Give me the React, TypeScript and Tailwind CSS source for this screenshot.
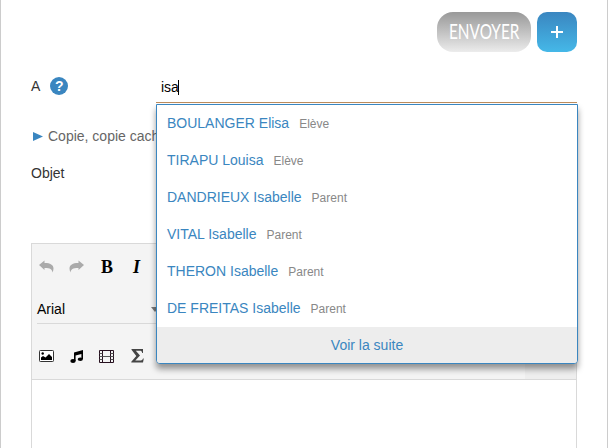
const suggestions = [
  { name: 'BOULANGER Elisa', role: 'Elève' },
  { name: 'TIRAPU Louisa', role: 'Elève' },
  { name: 'DANDRIEUX Isabelle', role: 'Parent' },
  { name: 'VITAL Isabelle', role: 'Parent' },
  { name: 'THERON Isabelle', role: 'Parent' },
  { name: 'DE FREITAS Isabelle', role: 'Parent' },
];

function Header() {
  return (
    <header className="flex h-[52px] items-end justify-end gap-1.5">
      <button className="flex h-10 w-[94px] items-center justify-center rounded-2xl bg-linear-to-b from-[#999] to-[#ececec] pb-[3px] font-[Lato,sans-serif] text-[21px] leading-none text-white">
        <span className="inline-block scale-x-[0.73]">ENVOYER</span>
      </button>
      <button className="flex size-10 items-center justify-center rounded-[10px] bg-linear-to-b from-[#3a86c0] to-[#45b8e8]">
        <svg width="12" height="12" viewBox="0 0 12 12" fill="#fff">
          <path d="M5 0h2v5h5v2H7v5H5V7H0V5h5z" />
        </svg>
      </button>
    </header>
  );
}

function HelpIcon() {
  return (
    <span className="flex size-[18px] items-center justify-center rounded-full bg-[#3a86c0] text-[14px] font-bold leading-none text-white">
      ?
    </span>
  );
}

function Suggestions() {
  return (
    <div className="absolute left-0 top-[29px] z-10 h-[260px] w-[422px] overflow-hidden rounded-b-[4px] border border-[#3a86c0] bg-white shadow-[0_5px_6px_rgba(0,0,0,0.4)]">
      {suggestions.map((s) => (
        <div key={s.name} className="flex h-[37px] items-baseline gap-2.5 px-2.5 pt-[9px] leading-[18px]">
          <span className="text-[14px] text-[#3a86c0]">{s.name}</span>
          <span className="text-[12px] text-[#888]">{s.role}</span>
        </div>
      ))}
      <div className="flex h-9 items-center justify-center bg-[#ededed] text-[14px] text-[#3a86c0]">Voir la suite</div>
    </div>
  );
}

function Undo({ flip = false }: { flip?: boolean }) {
  return (
    <svg width="15" height="13" viewBox="0 0 15 13" fill="#aaa" className={flip ? '-scale-x-100' : ''}>
      <path d="M0 5 5.500.5v2.600c5.500-.1 9 1.800 9 5.500 0 1.500-.4 2.800-1 3.900-.3-3.200-2.500-4.600-8-4.500V10z" />
    </svg>
  );
}

function Toolbar() {
  return (
    <div className="flex h-[136px] border-b border-[#d9d9d9] bg-[#f4f4f4]">
      <div className="w-[493px] shrink-0">
        <div className="flex h-[45px] items-center pl-[7px] font-['Liberation_Serif',serif] text-[18px] font-bold text-black">
          <Undo />
          <span className="ml-[15px]"><Undo flip /></span>
          <span className="ml-[17px] pt-0.5">B</span>
          <span className="ml-5 pt-0.5 italic">I</span>
        </div>
        <div className="ml-[5px] mt-[5px] flex h-[30px] w-[122px] items-center justify-between border-b border-[#d9d9d9] pt-px text-[14px] text-black">
          Arial
          <svg width="8" height="5" viewBox="0 0 8 5" fill="#777"><path d="M0 0h8L4 5z" /></svg>
        </div>
        <div className="mt-[22px] flex h-5 items-center pl-[7px]">
          <svg width="15" height="12" viewBox="0 0 15 12">
            <rect x=".5" y=".5" width="14" height="11" rx=".8" fill="#fff" stroke="#333" />
            <path d="M2 10V7.500L4 6l2.500 1.500L10 4l3 3v3z" />
            <circle cx="3.700" cy="3.500" r="1.200" />
          </svg>
          <svg width="13" height="13" viewBox="0 0 13 13" className="ml-4">
            <path d="M4 2.500 13 0v9h-1.600V4L5.600 5.600V11H4z" />
            <ellipse cx="3" cy="11" rx="2.700" ry="1.900" />
            <ellipse cx="10.300" cy="9.200" rx="2.600" ry="1.800" />
          </svg>
          <svg width="15" height="13" viewBox="0 0 15 13" fill="none" stroke="#26101f" className="ml-4">
            <path d="M.5.5h14v12H.5zM3.500.5v12M11.500.5v12" />
            <path d="M3.500 6.500h8M.5 3.500h3M.5 6.500h3M.5 9.500h3M11.500 3.500h3M11.500 6.500h3M11.500 9.500h3" stroke="#555" />
          </svg>
          <svg width="13" height="14" viewBox="0 0 13 14" className="mb-px ml-[17px]" fill="#444">
            <path d="M.5 0H12v4h-.8C11 2.200 10.300 1.700 8.500 1.700H4.800L9 6.500 4.300 11.500h4.500c2 0 2.700-.6 3.200-2h.8L12 13.500H.3v-.8L5.300 7 .5.800z" />
          </svg>
        </div>
      </div>
      <div className="flex-1 bg-[#eee]" />
    </div>
  );
}

export default function App() {
  return (
    <main className="h-[448px] w-[608px] overflow-hidden border-x border-[#ccc] bg-white px-[30px] font-['Liberation_Sans',Arial,sans-serif] text-[14px] text-[#333]">
      <Header />
      <div className="mt-[23px] flex h-7 w-[546px]">
        <div className="flex h-[22px] w-[125px] items-center gap-2.5 text-[14px] text-[#333]">
          <span>A</span>
          <HelpIcon />
        </div>
        <div className="relative h-7 w-[421px] border-b border-[#bd8c5c]">
          <div className="flex h-[25px] items-center pl-[5px] text-[14px] text-black">
            isa<span className="-ml-px h-[15px] w-px bg-black" />
          </div>
          <Suggestions />
        </div>
      </div>
      <div className="mt-[22px] flex h-[22px] items-center gap-[5px] pl-[2px] text-[14px] text-[#666]">
        <svg width="10" height="9" viewBox="0 0 10 9" fill="#3a86c0" className="mt-px"><path d="M0 0l10 4.500-10 4.500z" /></svg>
        Copie, copie cachée
      </div>
      <div className="mt-[15px] flex h-[22px] items-center">Objet</div>
      <div className="mt-[59px] h-[220px] w-[546px] border border-[#d9d9d9] bg-white">
        <Toolbar />
      </div>
    </main>
  );
}
